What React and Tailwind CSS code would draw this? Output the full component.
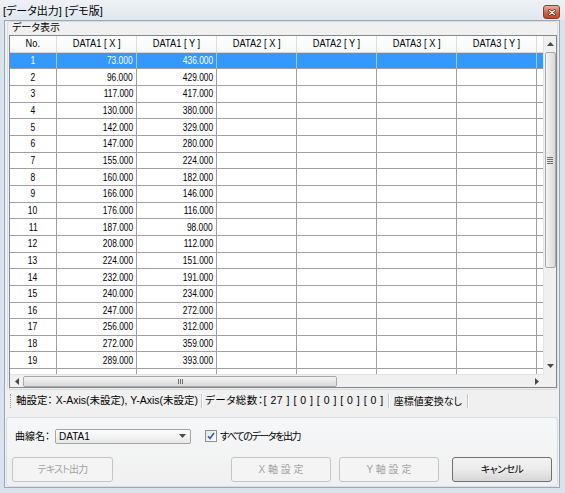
import React from "react";

const data = [
  [73, 436], [96, 429], [117, 417], [130, 380], [142, 329], [147, 280], [155, 224],
  [160, 182], [166, 146], [176, 116], [187, 98], [208, 112], [224, 151], [232, 191],
  [240, 234], [247, 272], [256, 312], [272, 359], [289, 393],
];

const headers = ["DATA1 [ X ]", "DATA1 [ Y ]", "DATA2 [ X ]", "DATA2 [ Y ]", "DATA3 [ X ]", "DATA3 [ Y ]", ""];

function Tri({ dir }) {
  const pts = {
    up: "0,4 3.5,0 7,4",
    down: "0,0 3.5,4 7,0",
    left: "4,0 0,3.5 4,7",
    right: "0,0 4,3.5 0,7",
  }[dir];
  const w = dir === "up" || dir === "down" ? 7 : 4;
  const h = dir === "up" || dir === "down" ? 4 : 7;
  return (
    <svg width={w} height={h} viewBox={`0 0 ${w} ${h}`}>
      <polygon points={pts} fill="#4a4a4a" />
    </svg>
  );
}

function DataRow({ no, x, y, selected }) {
  const base = selected ? "bg-[#3399ff] text-white" : "bg-white text-black";
  const line = selected ? "border-[#9ccaf7]" : "border-[#a0a0a0]";
  const vals = [x, y, null, null, null, null, null];
  return (
    <div className={`flex h-[16.67px] shrink-0 border-b border-[#a0a0a0] ${base}`}>
      <div className={`w-[47px] shrink-0 border-r ${line} flex items-center justify-center`}>
        <span className="inline-block scale-x-[0.85] origin-center">{no}</span>
      </div>
      {vals.map((v, i) => (
        <div key={i} className={`w-[80px] shrink-0 border-r ${line} flex items-center justify-end pr-[3px]`}>
          {v === null || v === undefined ? "" : (
            <span className="inline-block scale-x-[0.84] origin-right">{v.toFixed(3)}</span>
          )}
        </div>
      ))}
    </div>
  );
}

function Button({ children, disabled, className }) {
  return (
    <div
      className={`h-[25px] w-[100px] shrink-0 rounded-[3px] border flex items-center justify-center text-[10px] ${
        disabled
          ? "border-[#c2c5c8] bg-[#f4f4f4] text-[#a3a3a3]"
          : "border-[#707070] bg-linear-to-b from-[#f3f3f3] via-[#ebebeb] to-[#d6d6d6] text-black"
      } ${className || ""}`}
    >
      {children}
    </div>
  );
}

export default function App() {
  return (
    <div className="w-[565px] h-[493px] overflow-hidden bg-[#d9e3ed] flex flex-col font-['Liberation_Sans','Noto_Sans_CJK_JP',sans-serif] [font-feature-settings:'palt'] text-black select-none">
      {/* title bar */}
      <div className="h-[20px] shrink-0 flex items-start justify-between pl-[3px] pr-[5px] bg-linear-to-b from-[#eef2f6] to-[#dfe7ef]">
        <div className="text-[11px] leading-[20px] pt-[1px] text-black">[データ出力] [デモ版]</div>
        <div className="mt-[5px] w-[17px] h-[14px] rounded-[3px] border border-[#8b3b2a] bg-linear-to-b from-[#eab0a2] via-[#d8664c] to-[#c0432a] flex items-center justify-center shadow-[0_0_2px_rgba(255,255,255,0.8)]">
          <svg width="8" height="7" viewBox="0 0 8 7">
            <path d="M1.5 1.5 L6.5 5.5 M6.5 1.5 L1.5 5.5" stroke="#6a2616" strokeWidth="2.6" strokeLinecap="round" />
            <path d="M1.5 1.5 L6.5 5.5 M6.5 1.5 L1.5 5.5" stroke="#ffffff" strokeWidth="1.3" strokeLinecap="round" />
          </svg>
        </div>
      </div>

      {/* client */}
      <div className="flex-1 ml-[4px] mr-[5px] mb-[6px] bg-[#f0f0f0] border border-[#9ba7b3] flex flex-col">
        {/* group box */}
        <div className="ml-[2px] mr-[1px] border border-[#d5dfe5] rounded-[3px] pb-[1px] flex flex-col">
          <div className="h-[13px] pl-[4px] text-[10px] leading-[12px]">データ表示</div>
          <div className="ml-[1px] h-[353px] border border-[#828790] flex flex-col bg-white">
            <div className="flex h-[338px] shrink-0">
              {/* grid */}
              <div className="w-[533px] shrink-0 overflow-hidden flex flex-col text-[10px]">
                <div className="flex h-[16.67px] shrink-0 bg-linear-to-b from-white to-[#f7f8f9] border-b border-[#d5d5d5]">
                  <div className="w-[47px] shrink-0 border-r border-[#dcdcdc] flex items-center justify-center">
                    <span className="inline-block scale-x-[0.92]">No.</span>
                  </div>
                  {headers.map((h, i) => (
                    <div key={i} className="w-[80px] shrink-0 border-r border-[#dcdcdc] flex items-center justify-center">
                      <span className="inline-block scale-x-[0.93]">{h}</span>
                    </div>
                  ))}
                </div>
                {data.map((r, i) => (
                  <DataRow key={i} no={i + 1} x={r[0]} y={r[1]} selected={i === 0} />
                ))}
                <DataRow no="" x={null} y={null} />
              </div>
              {/* vertical scrollbar */}
              <div className="w-[13px] shrink-0 bg-[#f0f0f0] border-l border-[#e3e3e3] flex flex-col">
                <div className="h-[16px] shrink-0 flex items-center justify-center"><Tri dir="up" /></div>
                <div className="h-[216px] shrink-0 mx-[0.5px] rounded-[2px] border border-[#a9a9a9] bg-linear-to-r from-[#f4f4f4] to-[#d9d9d9] flex flex-col items-center justify-center gap-[1px]">
                  <div className="w-[6px] h-[1px] bg-[#6e6e6e]" />
                  <div className="w-[6px] h-[1px] bg-[#6e6e6e]" />
                  <div className="w-[6px] h-[1px] bg-[#6e6e6e]" />
                  <div className="w-[6px] h-[1px] bg-[#6e6e6e]" />
                </div>
                <div className="flex-1" />
                <div className="h-[16px] shrink-0 flex items-center justify-center"><Tri dir="down" /></div>
              </div>
            </div>
            <div className="flex h-[13px] shrink-0">
              <div className="flex-1 bg-[#f0f0f0] border-t border-[#e3e3e3] flex items-stretch">
                <div className="w-[13px] shrink-0 flex items-center justify-center"><Tri dir="left" /></div>
                <div className="w-[314px] shrink-0 my-[0.5px] rounded-[2px] border border-[#a9a9a9] bg-linear-to-b from-[#f4f4f4] to-[#d9d9d9] flex items-center justify-center gap-[1px]">
                  <div className="w-[1px] h-[5px] bg-[#6e6e6e]" />
                  <div className="w-[1px] h-[5px] bg-[#6e6e6e]" />
                  <div className="w-[1px] h-[5px] bg-[#6e6e6e]" />
                </div>
                <div className="flex-1" />
                <div className="w-[13px] shrink-0 flex items-center justify-center"><Tri dir="right" /></div>
              </div>
              <div className="w-[13px] shrink-0 bg-[#f0f0f0]" />
            </div>
          </div>
        </div>

        {/* status bar */}
        <div className="h-[16px] mt-[3px] shrink-0 flex items-center text-[10.5px]">
          <div className="ml-[5px] w-[1px] h-[14px] border-l border-dotted border-[#9a9a9a]" />
          <div className="ml-[5px] whitespace-nowrap">軸設定： X-Axis(未設定), Y-Axis(未設定)</div>
          <div className="ml-[3px] w-[2px] h-[14px] border-l border-[#c8c8c8] border-r border-r-white" />
          <div className="ml-[2px] whitespace-nowrap tracking-[0.5px]">データ総数：[ 27 ] [ 0 ] [ 0 ] [ 0 ] [ 0 ]</div>
          <div className="ml-[4px] w-[2px] h-[14px] border-l border-[#c8c8c8] border-r border-r-white" />
          <div className="ml-[4px] whitespace-nowrap text-[10px]">座標値変換なし</div>
          <div className="ml-[5px] w-[2px] h-[14px] border-l border-[#c8c8c8] border-r border-r-white" />
        </div>

        {/* bottom panel */}
        <div className="mt-[8px] ml-[1px] mr-[1px] h-[70px] shrink-0 border border-[#d5dfe5] rounded-[3px] bg-linear-to-b from-[#f5f7f8] to-[#f0f0f0] flex flex-col">
          <div className="mt-[10px] h-[16px] flex items-center text-[10px]">
            <div className="ml-[8px] w-[40px] shrink-0">曲線名：</div>
            <div className="w-[136px] h-[15px] shrink-0 border border-[#a5a5a5] rounded-[2px] bg-linear-to-b from-[#fdfdfd] to-[#e8e8e8] flex items-center justify-between pl-[3px] pr-[4px]">
              <span className="text-[10px]">DATA1</span>
              <Tri dir="down" />
            </div>
            <div className="ml-[14px] w-[12px] h-[12px] shrink-0 border border-[#8f8f8f] bg-linear-to-br from-[#e4e4e4] to-white flex items-center justify-center">
              <svg width="8" height="8" viewBox="0 0 8 8">
                <path d="M1 4.2 L3 6.5 L7 1" stroke="#2b5ea8" strokeWidth="1.6" fill="none" />
              </svg>
            </div>
            <div className="ml-[3px] whitespace-nowrap tracking-[-1.4px]">すべてのデータを出力</div>
          </div>
          <div className="mt-[13px] flex">
            <Button disabled className="ml-[5px] w-[101px]">
              <span className="tracking-[-0.8px]">テキスト出力</span>
            </Button>
            <Button disabled className="ml-[118px]">X 軸 設 定</Button>
            <Button disabled className="ml-[8px]">Y 軸 設 定</Button>
            <Button className="ml-[13px]">
              <span className="tracking-[-0.6px]">キャンセル</span>
            </Button>
          </div>
        </div>
      </div>
    </div>
  );
}
